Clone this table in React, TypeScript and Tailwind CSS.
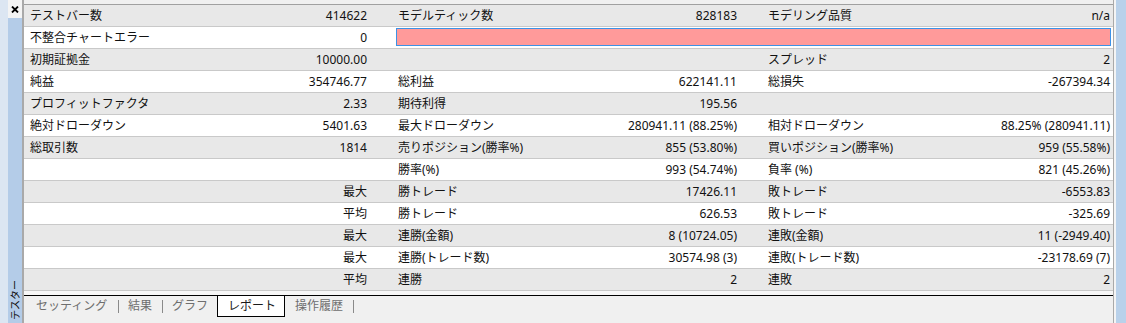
import React from "react";

type Row = [string, string, string, string, string, string] | "error";

const rows: Row[] = [
  ["テストバー数", "414622", "モデルティック数", "828183", "モデリング品質", "n/a"],
  "error",
  ["初期証拠金", "10000.00", "", "", "スプレッド", "2"],
  ["純益", "354746.77", "総利益", "622141.11", "総損失", "-267394.34"],
  ["プロフィットファクタ", "2.33", "期待利得", "195.56", "", ""],
  ["絶対ドローダウン", "5401.63", "最大ドローダウン", "280941.11 (88.25%)", "相対ドローダウン", "88.25% (280941.11)"],
  ["総取引数", "1814", "売りポジション(勝率%)", "855 (53.80%)", "買いポジション(勝率%)", "959 (55.58%)"],
  ["", "", "勝率(%)", "993 (54.74%)", "負率 (%)", "821 (45.26%)"],
  ["", "最大", "勝トレード", "17426.11", "敗トレード", "-6553.83"],
  ["", "平均", "勝トレード", "626.53", "敗トレード", "-325.69"],
  ["", "最大", "連勝(金額)", "8 (10724.05)", "連敗(金額)", "11 (-2949.40)"],
  ["", "最大", "連勝(トレード数)", "30574.98 (3)", "連敗(トレード数)", "-23178.69 (7)"],
  ["", "平均", "連勝", "2", "連敗", "2"],
];

function DataRow({ row, index }: { row: Row; index: number }) {
  const bg = index % 2 === 0 ? "bg-[#e8e8e8]" : "bg-white";
  if (row === "error") {
    return (
      <div className={`grid grid-cols-[176px_195px_718px] h-[22px] border-b border-[#c9c9c9] ${bg}`}>
        <div className="flex items-center pl-[6px]">不整合チャートエラー</div>
        <div className="flex items-center justify-end pr-[28px]">0</div>
        <div className="pl-[1px] pr-[2px] pt-[1px] pb-[2px] flex">
          <div className="flex-1 bg-[#ff9a9a] border border-[#3c92e6]" />
        </div>
      </div>
    );
  }
  return (
    <div
      className={`grid grid-cols-[176px_195px_175px_193px_167px_183px] h-[22px] border-b border-[#c9c9c9] ${bg}`}
    >
      <div className="flex items-center pl-[6px] whitespace-nowrap">{row[0]}</div>
      <div className="flex items-center justify-end pr-[28px] whitespace-nowrap">{row[1]}</div>
      <div className="flex items-center pl-[3px] whitespace-nowrap">{row[2]}</div>
      <div className="flex items-center justify-end pr-[26px] whitespace-nowrap">{row[3]}</div>
      <div className="flex items-center pl-[5px] whitespace-nowrap">{row[4]}</div>
      <div className="flex items-center justify-end pr-[3px] whitespace-nowrap">{row[5]}</div>
    </div>
  );
}

export default function App() {
  return (
    <div
      className="w-[1126px] h-[323px] flex bg-[#f0f0f0] overflow-hidden text-[12px] text-[#111]"
      style={{ fontFamily: '"Noto Sans", "Noto Sans CJK JP", sans-serif' }}
    >
      {/* outer left frame */}
      <div className="w-[8px] h-full bg-[#dce6f2]" />
      {/* side caption strip */}
      <div className="w-[14px] h-full flex flex-col bg-[#b4cce8]">
        <div className="h-[18px] bg-[#f4f4f4] flex items-center justify-center">
          <svg width="8" height="7" viewBox="0 0 8 7">
            <path d="M1 0.5 L7 6.5 M7 0.5 L1 6.5" stroke="#000" strokeWidth="1.8" />
          </svg>
        </div>
        <div className="flex-1" />
        <div className="flex justify-center pb-[3px]">
          <span className="[writing-mode:vertical-rl] [text-orientation:sideways] rotate-180 text-[10px] leading-[14px] whitespace-nowrap text-[#111]">
            テスター
          </span>
        </div>
      </div>
      <div className="w-[2px] h-full bg-[#a9a9a9]" />
      {/* main panel */}
      <div className="w-[1089px] h-full flex flex-col">
        <div className="h-[4px] bg-[#f0f0f0]" />
        <div className="h-[1px] bg-[#a0a0a0]" />
        {rows.map((r, i) => (
          <DataRow key={i} row={r} index={i} />
        ))}
        <div className="flex-1 flex flex-col bg-[#f0f0f0]">
          <div className="h-[4px] bg-[#f7f7f7]" />
          <div className="h-[1px] bg-black" />
          <div className="flex items-start h-[21px] text-[#6e6e6e]">
            <div className="w-[12px]" />
            <div className="w-[82px] h-[20px] flex items-center whitespace-nowrap">セッティング</div>
            <div className="w-[1px] h-[13px] mt-[4px] bg-[#8a8a8a]" />
            <div className="w-[9px]" />
            <div className="w-[34px] h-[20px] flex items-center whitespace-nowrap">結果</div>
            <div className="w-[1px] h-[13px] mt-[4px] bg-[#8a8a8a]" />
            <div className="w-[9px]" />
            <div className="w-[45px] h-[20px] flex items-center whitespace-nowrap">グラフ</div>
            <div className="w-[68px] h-[21px] bg-white border-l border-r border-b border-black flex items-center pl-[10px] text-[#1a1a1a] whitespace-nowrap">
              レポート
            </div>
            <div className="w-[10px]" />
            <div className="w-[58px] h-[20px] flex items-center whitespace-nowrap">操作履歴</div>
            <div className="w-[1px] h-[13px] mt-[4px] bg-[#8a8a8a]" />
          </div>
        </div>
      </div>
      <div className="w-[3px] h-full bg-[#f4f4f4] border-l border-[#a9a9a9]" />
      <div className="flex-1 h-full bg-[#b9d1ea]" />
    </div>
  );
}
